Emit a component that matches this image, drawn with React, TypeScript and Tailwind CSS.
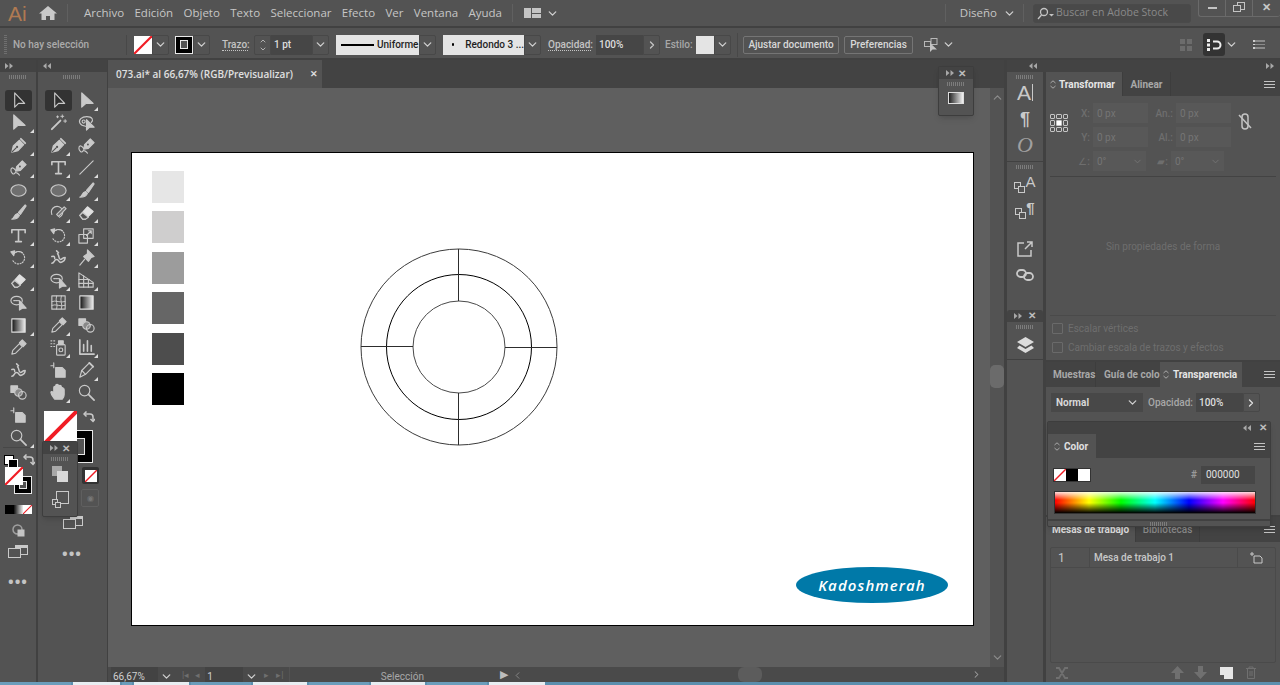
import type { ReactNode } from "react";
import { ChevronDown, ChevronLeft, ChevronRight, ChevronUp } from "lucide-react";

const INK = "#c9c9c9";

function Glyph({ size = 20, children }: { size?: number; children: ReactNode }) {
  return (
    <svg width={size} height={size} viewBox="0 0 20 20" fill="none" stroke={INK} strokeWidth="1.2" strokeLinejoin="round" strokeLinecap="round">
      {children}
    </svg>
  );
}

// tool icons, all on a 20x20 box
const TOOL_ICONS: Record<string, ReactNode> = {
  select: <path d="M6 2v15l4-4h6.500z" fill="#2f2f2f" />,
  direct: <path d="M5 2v15l4.500-4H17z" fill={INK} />,
  wand: (
    <>
      <path d="M3 17l9-9" strokeWidth="2" />
      <path d="M14 2v3M12.500 3.500h3M17 7v3M15.500 8.500h3M9 3v2M8 4h2" strokeWidth="1" />
    </>
  ),
  lasso: (
    <>
      <path d="M9 14C3 13 1 9 4 6c3-3 10-3 12 0 1 2 0 3-1 4" />
      <circle cx="7" cy="9" r="1.600" />
      <path d="M10 7v11l3-3h5z" fill={INK} />
    </>
  ),
  pen: (
    <>
      <path d="M3 17l1.500-6.500L11 4.500l4.500 4.500-6 6.500z" fill={INK} />
      <path d="M3.500 16.500l4-4" stroke="#535353" />
      <circle cx="8.500" cy="11.500" r="1.200" fill="#535353" stroke="none" />
      <path d="M12.500 3l4.500 4.500" strokeWidth="2" />
    </>
  ),
  curve: (
    <>
      <path d="M8 9l6-6 4 4-6 6-5 1z" fill={INK} />
      <circle cx="11.500" cy="9" r="1" fill="#535353" stroke="none" />
      <path d="M7 13c-3-4-5-3-5 0s3 5 4 3 4 1 5 2" />
    </>
  ),
  type: <path d="M3 7V4h14v3M10 4v12M7 16.500h6" strokeWidth="1.700" />,
  line: <path d="M3 17L17 3" />,
  ellipse: <ellipse cx="10" cy="10" rx="8" ry="6" fill="#6f6f6f" />,
  brush: (
    <>
      <path d="M10 10l7-8 1 1-6 9z" fill={INK} />
      <path d="M3 17c2 0 2-5 6-6l2 2c-1 3-4 4-8 4z" fill={INK} />
    </>
  ),
  shaper: (
    <>
      <path d="M3 12a6 6 0 1 1 8 3" />
      <path d="M10 14l8-8-2-2-8 8z" fill="#6f6f6f" />
    </>
  ),
  eraser: (
    <>
      <path d="M3 13l8-9 6 5-8 8H6z" fill="#e0e0e0" stroke="#e0e0e0" />
      <path d="M3 13l3-3 6 5-3 2H6z" fill="#535353" />
    </>
  ),
  rotate: (
    <>
      <path d="M5 6a6.500 6.500 0 1 1 -1 7" strokeDasharray="1.200 1.600" />
      <path d="M5 6a6.500 6.500 0 0 1 9-1" />
      <path d="M2 4l4-1-1 5z" fill={INK} />
    </>
  ),
  scale: (
    <>
      <rect x="2" y="9" width="9" height="9" />
      <rect x="7" y="3" width="10" height="10" />
      <path d="M10 10l5-5M12 5h3v3" />
    </>
  ),
  puppet: <path d="M3 16c3 0 2-4 5-4s2 4 5 3 4-3 4-5c-3 0-3 2-5 2s-1-4-3-6M8 3l2 2M3 9c2-1 3 0 3 2" strokeWidth="1.600" />,
  pin: (
    <>
      <path d="M11 2l7 7-3 1-3 4-5-5 4-3z" fill={INK} />
      <path d="M8 12l-5 6" />
    </>
  ),
  builder: (
    <>
      <ellipse cx="8" cy="8" rx="6" ry="4.500" />
      <path d="M5 8h5" strokeDasharray="1 1" />
      <path d="M11 8v10l3-2h4z" fill={INK} />
    </>
  ),
  perspective: (
    <>
      <path d="M2 2l15 10v5H2z" />
      <path d="M7 5v12M12 9v8M2 9h11M2 13h15" />
    </>
  ),
  mesh: (
    <>
      <rect x="3" y="3" width="14" height="14" />
      <path d="M3 9c4-2 9 2 14 0M3 13c4-2 9 2 14 0M8 3c-2 5 2 9 0 14M13 3c-2 5 2 9 0 14" strokeWidth="1" />
    </>
  ),
  gradient: (
    <>
      <defs>
        <linearGradient id="gr1">
          <stop offset="0" stopColor="#111" />
          <stop offset="1" stopColor="#eee" />
        </linearGradient>
      </defs>
      <rect x="3" y="3" width="14" height="14" fill="url(#gr1)" stroke="#ddd" />
    </>
  ),
  dropper: (
    <>
      <path d="M3 17l1-4 7-7 3 3-7 7z" />
      <path d="M11 5l3-3 4 4-3 3z" fill={INK} />
    </>
  ),
  blend: (
    <>
      <rect x="2" y="3" width="7" height="7" fill={INK} />
      <circle cx="10" cy="10" r="4" fill="#888" />
      <circle cx="14" cy="13" r="4" />
    </>
  ),
  spray: (
    <>
      <rect x="8" y="7" width="9" height="11" rx="1" />
      <circle cx="12.500" cy="12.500" r="2" />
      <rect x="10" y="3" width="5" height="4" fill={INK} />
      <path d="M2 3h1M5 3h1M2 6h1M5 6h1M2 9h1M5 9h1" />
    </>
  ),
  chart: <path d="M3 2v15h15M7 14V7M11 14V3M15 14V8" strokeWidth="1.700" />,
  artboard: (
    <>
      <path d="M7 7h7l3 3v7H7z" fill={INK} />
      <path d="M5 2v5M2 5h3" />
    </>
  ),
  slice: (
    <>
      <path d="M3 17l2-7 8-8 4 4-8 8z" />
      <path d="M5 10l4 4" />
      <path d="M13 2l4 4" strokeWidth="2" />
    </>
  ),
  hand: <path d="M6 17c-2-3-4-5-4-7s2-1 3 1V5c0-2 2-2 2 0V3c0-2 3-2 3 0v1c0-2 3-2 3 0v2c0-2 3-1 3 1v5c0 3-1 4-2 5z" fill={INK} />,
  zoom: (
    <>
      <circle cx="8" cy="8" r="5.500" />
      <path d="M12 12l6 6" strokeWidth="1.800" />
    </>
  ),
};

type Tool = { icon: string; flyout?: boolean; active?: boolean };

const LEFT_TOOLS: Tool[] = [
  { icon: "select", active: true },
  { icon: "direct", flyout: true },
  { icon: "pen", flyout: true },
  { icon: "curve", flyout: true },
  { icon: "ellipse", flyout: true },
  { icon: "brush", flyout: true },
  { icon: "type", flyout: true },
  { icon: "rotate", flyout: true },
  { icon: "eraser", flyout: true },
  { icon: "builder" },
  { icon: "gradient", flyout: true },
  { icon: "dropper" },
  { icon: "puppet" },
  { icon: "blend" },
  { icon: "artboard" },
  { icon: "zoom", flyout: true },
];

const RIGHT_TOOLS: Tool[] = [
  { icon: "select", active: true },
  { icon: "direct", flyout: true },
  { icon: "wand" },
  { icon: "lasso" },
  { icon: "pen", flyout: true },
  { icon: "curve" },
  { icon: "type", flyout: true },
  { icon: "line", flyout: true },
  { icon: "ellipse", flyout: true },
  { icon: "brush", flyout: true },
  { icon: "shaper", flyout: true },
  { icon: "eraser", flyout: true },
  { icon: "rotate", flyout: true },
  { icon: "scale", flyout: true },
  { icon: "puppet" },
  { icon: "pin", flyout: true },
  { icon: "builder", flyout: true },
  { icon: "perspective", flyout: true },
  { icon: "mesh" },
  { icon: "gradient" },
  { icon: "dropper", flyout: true },
  { icon: "blend" },
  { icon: "spray", flyout: true },
  { icon: "chart", flyout: true },
  { icon: "artboard" },
  { icon: "slice", flyout: true },
  { icon: "hand", flyout: true },
  { icon: "zoom" },
];

const MENU = ["Archivo", "Edición", "Objeto", "Texto", "Seleccionar", "Efecto", "Ver", "Ventana", "Ayuda"];
const GREYS = ["bg-[#e6e6e6]", "bg-[#cfcece]", "bg-[#9c9c9c]", "bg-[#666666]", "bg-[#4d4d4d]", "bg-[#000000]"];
const TASKBAR = ["w-[71px]", "w-[47px]", "w-[10px]", "w-[55px]", "w-[60px]", "w-[54px]", "w-[60px]", "w-[54px]", "w-[60px]", "w-[56px]"];

function ToolCell({ tool }: { tool: Tool }) {
  return (
    <div className="relative flex h-[22.5px] items-center justify-center">
      {tool.active && <div className="absolute h-[21px] w-[27px] rounded-[3px] bg-[#333333]" />}
      <div className="relative flex">
        <Glyph size={19}>{TOOL_ICONS[tool.icon]}</Glyph>
      </div>
      {tool.flyout && (
        <div className="absolute bottom-[1px] right-[2px] h-0 w-0 border-b-[4px] border-l-[4px] border-b-[#dddddd] border-l-transparent" />
      )}
    </div>
  );
}

function NoneSwatch({ className }: { className: string }) {
  return (
    <svg className={className} viewBox="0 0 20 20" preserveAspectRatio="none">
      <rect width="20" height="20" fill="#fff" />
      <path d="M0 20L20 0" stroke="#f01c24" strokeWidth="2.400" />
    </svg>
  );
}

function StrokeSwatch({ className }: { className: string }) {
  return (
    <div className={`flex items-center justify-center border border-[#e8e8e8] bg-black ${className}`}>
      <div className="h-[55%] w-[55%] border border-[#e8e8e8] bg-[#535353]" />
    </div>
  );
}

function DoubleArrow({ left = false }: { left?: boolean }) {
  return (
    <svg width="8" height="6" viewBox="0 0 8 6" fill="#a8a8a8">
      {left ? <path d="M3.500 0v6L0 3zM8 0v6L4.500 3z" /> : <path d="M0 0v6l3.500-3zM4.500 0v6L8 3z" />}
    </svg>
  );
}

function CloseX() {
  return <span className="text-[10px] leading-none font-bold text-[#bdbdbd]">✕</span>;
}

function Grip() {
  return <div className="h-[4px] w-[18px] bg-[repeating-linear-gradient(to_right,#7c7c7c_0,#7c7c7c_1px,transparent_1px,transparent_2px)]" />;
}

function Burger() {
  return (
    <div className="flex w-[11px] flex-col gap-[2px]">
      <div className="h-px bg-[#c4c4c4]" />
      <div className="h-px bg-[#c4c4c4]" />
      <div className="h-px bg-[#c4c4c4]" />
    </div>
  );
}

function Chev({ className = "" }: { className?: string }) {
  return <ChevronDown size={13} strokeWidth={2.400} className={`text-[#d0d0d0] ${className}`} />;
}

function ChevBox({ className = "" }: { className?: string }) {
  return (
    <div className={`flex h-[20px] w-[17px] items-center justify-center rounded-r-[2px] border border-[#484848] ${className}`}>
      <Chev />
    </div>
  );
}

function MenuBar() {
  return (
    <header className="flex h-[28px] shrink-0 items-center border-b-2 border-[#414141] bg-[#535353] text-[11.5px] text-[#c6c6c6]">
      <span className="ml-[8px] w-[18px] font-['Liberation_Sans',sans-serif] text-[21px] leading-none text-[#b07a52]">Ai</span>
      <svg className="ml-[13px]" width="18" height="16" viewBox="0 0 18 16" fill="#c9c9c9">
        <path d="M9 1L0 8.500h2.500V15h4.500v-4h4v4h4.500V8.500H18z" />
      </svg>
      <div className="ml-[10px] h-[18px] w-px bg-[#606060]" />
      <nav className="ml-[16px] flex w-[418px] justify-between">
        {MENU.map((item) => (
          <span key={item}>{item}</span>
        ))}
      </nav>
      <div className="ml-[10px] h-[18px] w-px bg-[#606060]" />
      <div className="ml-[11px] flex h-[10px] w-[17px] gap-px">
        <div className="w-[7px] bg-[#c4c4c4]" />
        <div className="flex flex-1 flex-col gap-px">
          <div className="flex-1 bg-[#c4c4c4]" />
          <div className="flex-1 bg-[#c4c4c4]" />
        </div>
      </div>
      <Chev className="ml-[5px]" />
      <div className="ml-auto h-[18px] w-px bg-[#606060]" />
      <span className="ml-[14px]">Diseño</span>
      <Chev className="ml-[6px]" />
      <div className="ml-[7px] h-[18px] w-px bg-[#606060]" />
      <div className="ml-[9px] flex h-[19px] w-[158px] items-center gap-[2px] rounded-[3px] border border-[#4a4a4a] bg-[#494949] pl-[3px] text-[10.5px] text-[#8a8a8a]">
        <svg width="17" height="13" viewBox="0 0 17 13" fill="none" stroke="#c4c4c4" strokeWidth="1.300">
          <circle cx="7" cy="5" r="3.500" />
          <path d="M4.500 8L1 12" />
          <path d="M12 7h5l-2.500 2.500z" fill="#c4c4c4" stroke="none" />
        </svg>
        Buscar en Adobe Stock
      </div>
      <div className="mb-[10px] ml-[7px] flex h-[17px] w-[82px] rounded-b-[3px] border-b border-l border-[#6a6a6a]">
        <div className="flex w-[27px] items-center justify-center border-r border-[#6a6a6a]">
          <div className="h-[2px] w-[9px] bg-[#c4c4c4]" />
        </div>
        <div className="relative flex w-[27px] items-center justify-center border-r border-[#6a6a6a]">
          <div className="h-[8px] w-[8px] translate-x-[2px] -translate-y-[2px] border border-[#c4c4c4]" />
          <div className="absolute h-[7px] w-[8px] translate-x-[-2px] translate-y-[1px] border border-[#c4c4c4] bg-[#535353]" />
        </div>
        <div className="flex flex-1 items-center justify-center text-[11px] font-bold text-[#c8c8c8]">✕</div>
      </div>
    </header>
  );
}

function LightField({ width, children }: { width: string; children: ReactNode }) {
  return <div className={`flex h-[20px] items-center whitespace-nowrap bg-[#e4e4e4] text-[#1f1f1f] ${width}`}>{children}</div>;
}

function ControlBar() {
  return (
    <div className="flex h-[32px] shrink-0 items-center border-b-2 border-[#414141] bg-[#535353] pt-[3px] font-['Roboto',sans-serif] text-[10px] font-medium text-[#c4c4c4]">
      <div className="ml-[4px] h-[20px] w-[3px] bg-[repeating-linear-gradient(to_bottom,#6f6f6f_0,#6f6f6f_1px,transparent_1px,transparent_2px)]" />
      <span className="ml-[6px] w-[113px] text-[#ababab]">No hay selección</span>
      <div className="h-[20px] w-px bg-[#484848]" />
      <NoneSwatch className="ml-[7px] h-[18px] w-[18px]" />
      <ChevBox />
      <StrokeSwatch className="ml-[6px] h-[18px] w-[18px]" />
      <ChevBox />
      <span className="ml-[12px] w-[26px] border-b border-dotted border-[#c4c4c4] leading-[11px]">Trazo:</span>
      <div className="ml-[6px] flex h-[20px] w-[17px] flex-col items-center justify-center rounded-l-[2px] border border-[#484848]">
        <ChevronUp size={8} strokeWidth={2.500} />
        <ChevronDown size={8} strokeWidth={2.500} />
      </div>
      <div className="flex h-[20px] w-[41px] items-center bg-[#464646] pl-[3px] text-[#dedede]">1 pt</div>
      <ChevBox />
      <div className="ml-[7px]">
        <LightField width="w-[83px]">
          <div className="ml-[5px] h-[2px] w-[33px] bg-black" />
          <span className="ml-[3px]">Uniforme</span>
        </LightField>
      </div>
      <ChevBox />
      <div className="ml-[7px]">
        <LightField width="w-[81px]">
          <div className="ml-[9px] h-[3px] w-[3px] rounded-full bg-black" />
          <span className="ml-[11px]">Redondo 3 ...</span>
        </LightField>
      </div>
      <ChevBox />
      <span className="ml-[7px] w-[43px] border-b border-dotted border-[#c4c4c4] leading-[11px]">Opacidad:</span>
      <div className="ml-[5px] flex h-[20px] w-[47px] items-center bg-[#464646] pl-[3px] text-[#dedede]">100%</div>
      <div className="flex h-[20px] w-[17px] items-center justify-center rounded-r-[2px] border border-[#484848]">
        <ChevronRight size={12} strokeWidth={2.600} />
      </div>
      <span className="ml-[5px] w-[26px] text-[#a8a8a8]">Estilo:</span>
      <div className="ml-[5px] h-[18px] w-[18px] bg-[#e4e4e4]" />
      <ChevBox />
      <div className="ml-[6px] h-[24px] w-px bg-[#484848]" />
      <div className="ml-[5px] flex h-[18px] w-[96px] items-center justify-center rounded-[2px] border border-[#757575] text-[#d8d8d8]">Ajustar documento</div>
      <div className="ml-[5px] flex h-[18px] w-[69px] items-center justify-center rounded-[2px] border border-[#757575] text-[#d8d8d8]">Preferencias</div>
      <svg className="ml-[10px]" width="16" height="15" viewBox="0 0 16 15" fill="none" stroke="#b8b8b8">
        <rect x="8" y="1.500" width="6" height="6" />
        <rect x="1.500" y="4.500" width="6" height="5" />
        <path d="M7 6v9l2.500-2.500H14z" fill="#c4c4c4" stroke="none" />
      </svg>
      <Chev className="ml-[3px]" />
      <div className="ml-auto grid h-[12px] w-[12px] grid-cols-2 gap-[2px]">
        <div className="bg-[#6c6c6c]" />
        <div className="bg-[#6c6c6c]" />
        <div className="bg-[#6c6c6c]" />
        <div className="bg-[#6c6c6c]" />
      </div>
      <div className="ml-[11px] flex h-[23px] w-[22px] items-center justify-center rounded-[3px] bg-[#333333]">
        <svg width="16" height="14" viewBox="0 0 16 14" fill="none">
          <path d="M1 1h3v3H1zM1 5.500h3v3H1zM1 10h3v3H1z" fill="#eee" />
          <path d="M7 3.500h4a3.500 3.500 0 0 1 0 7H7" stroke="#eee" strokeWidth="2" />
        </svg>
      </div>
      <Chev />
      <div className="ml-[15px] mr-[15px] flex w-[12px] flex-col gap-[2px]">
        <div className="h-[1.500px] border-l-[2px] border-[#cfcfcf] bg-[#8a8a8a]" />
        <div className="h-[1.500px] border-l-[2px] border-[#cfcfcf] bg-[#8a8a8a]" />
        <div className="h-[1.500px] border-l-[2px] border-[#cfcfcf] bg-[#8a8a8a]" />
      </div>
    </div>
  );
}

function ToolDots() {
  return <div className="text-center text-[15px] leading-none font-bold tracking-[1px] text-[#c4c4c4]">•••</div>;
}

function ScreenMode() {
  return (
    <svg width="20" height="14" viewBox="0 0 20 14" fill="#535353" stroke="#c9c9c9">
      <rect x="7.500" y="0.500" width="12" height="9" />
      <rect x="0.500" y="3.500" width="12" height="9" />
      <rect x="8" y="1" width="11" height="2" fill="#c9c9c9" stroke="none" />
    </svg>
  );
}

function SwapArrow({ className }: { className: string }) {
  return (
    <svg className={className} width="12" height="12" viewBox="0 0 12 12" fill="none" stroke="#c9c9c9" strokeWidth="1.500">
      <path d="M2 3h5a3 3 0 0 1 3 3v4" />
      <path d="M3.500 .5L1 3l2.500 2.500M7.500 8l2.500 2.500L12 8" />
    </svg>
  );
}

function DrawMode() {
  return (
    <svg width="13" height="13" viewBox="0 0 13 13" fill="none">
      <circle cx="5.500" cy="5.500" r="4.500" stroke="#a0a0a0" strokeWidth="1.500" />
      <rect x="5.500" y="5.500" width="7" height="7" fill="#c4c4c4" />
    </svg>
  );
}

function LeftToolbar() {
  return (
    <aside className="flex w-[36px] shrink-0 flex-col bg-[#535353]">
      <div className="flex h-[12px] items-center bg-[#434343] pl-[5px]">
        <DoubleArrow />
      </div>
      <div className="flex h-[17px] justify-center pt-[3px]">
        <Grip />
      </div>
      {LEFT_TOOLS.map((tool, i) => (
        <ToolCell key={i} tool={tool} />
      ))}
      <div className="mx-[3px] mt-[-2px] h-px bg-[#474747]" />
      <div className="relative mt-[7px] h-[48px]">
        <div className="absolute left-[4px] top-0 h-[10px] w-[10px] border border-black bg-white" />
        <div className="absolute left-[8px] top-[4px] h-[10px] w-[10px] border border-white bg-black" />
        <SwapArrow className="absolute left-[23px] top-[-1px]" />
        <StrokeSwatch className="absolute left-[14px] top-[21px] h-[18px] w-[18px]" />
        <NoneSwatch className="absolute left-[5px] top-[12px] h-[18px] w-[18px]" />
      </div>
      <div className="mt-[2px] flex justify-center">
        <div className="flex h-[9px] w-[27px]">
          <div className="w-[9px] bg-black" />
          <div className="w-[9px] bg-[linear-gradient(to_right,#111,#eee)]" />
          <NoneSwatch className="h-[9px] w-[9px]" />
        </div>
      </div>
      <div className="mt-[8px] flex h-[16px] items-center justify-center">
        <DrawMode />
      </div>
      <div className="mt-[7px] flex justify-center">
        <ScreenMode />
      </div>
      <div className="mt-[15px]">
        <ToolDots />
      </div>
    </aside>
  );
}

function SecondToolbar() {
  return (
    <aside className="relative ml-[2px] flex w-[69px] shrink-0 flex-col bg-[#535353] pl-[6px] pr-[7px]">
      <div className="-ml-[6px] -mr-[7px] flex h-[12px] items-center bg-[#434343] pl-[5px]">
        <DoubleArrow left />
      </div>
      <div className="flex h-[17px] justify-center pt-[3px]">
        <Grip />
      </div>
      <div className="grid grid-cols-2">
        {RIGHT_TOOLS.map((tool, i) => (
          <ToolCell key={i} tool={tool} />
        ))}
      </div>
      <div className="relative h-[100px]">
        <StrokeSwatch className="absolute left-[16px] top-[26px] h-[33px] w-[33px]" />
        <NoneSwatch className="absolute left-0 top-[7px] h-[33px] w-[33px]" />
        <SwapArrow className="absolute left-[39px] top-[7px]" />
        <div className="absolute left-[38px] top-[63px] flex h-[17px] w-[17px] items-center justify-center rounded-[2px] bg-[#333333]">
          <NoneSwatch className="h-[12px] w-[12px]" />
        </div>
        <div className="absolute left-[37px] top-[85px] flex h-[18px] w-[18px] items-center justify-center rounded-[2px] border border-[#606060] text-[8px] text-[#777777]">◉</div>
      </div>
      <div className="mt-[12px] flex justify-center pl-[1px]">
        <ScreenMode />
      </div>
      <div className="mt-[16px]">
        <ToolDots />
      </div>
    </aside>
  );
}

function Artboard() {
  return (
    <div className="relative ml-[23px] mt-[64px] h-[474px] w-[843px] border border-black bg-white">
      <div className="absolute left-[20px] top-[18px] flex flex-col gap-[8.400px]">
        {GREYS.map((c) => (
          <div key={c} className={`h-[32px] w-[32px] ${c}`} />
        ))}
      </div>
      <svg className="absolute left-[227px] top-[94px]" width="200" height="200" viewBox="0 0 200 200" fill="none" stroke="#2d2d2d">
        <circle cx="100" cy="100" r="98" stroke="#3c3c3c" />
        <circle cx="100" cy="100" r="72.500" stroke="#000" />
        <circle cx="100" cy="100" r="46" stroke="#4a4a4a" />
        <path d="M99.500 2v52M99.500 146v52M2 99.500h52M146 100.500h52" />
      </svg>
      <div className="absolute left-[664px] top-[414px] flex h-[36px] w-[152px] items-center justify-center rounded-[50%] bg-[#0079a8] text-[15px] font-semibold tracking-[1.100px] text-white italic">
        Kadoshmerah
      </div>
    </div>
  );
}

function Document() {
  return (
    <main className="ml-px flex min-w-0 flex-1 flex-col">
      <div className="flex h-[28px] shrink-0 bg-[#434343]">
        <div className="flex w-[214px] items-center bg-[#535353] pl-[8px] text-[10px] font-semibold text-[#e0e0e0]">
          <span className="w-[194px]">073.ai* al 66,67% (RGB/Previsualizar)</span>
          <span className="text-[9px] font-bold text-[#dcdcdc]">✕</span>
        </div>
      </div>
      <div className="flex min-h-0 flex-1">
        <div className="flex-1 bg-[#5f5f5f]">
          <Artboard />
        </div>
        <div className="relative flex w-[14px] flex-col items-center justify-between bg-[#535353] py-[3px]">
          <ChevronUp size={13} strokeWidth={2.200} className="text-[#8c8c8c]" />
          <div className="absolute left-0 top-[277px] h-[23px] w-[14px] rounded-[5px] bg-[#6b6b6b]" />
          <ChevronDown size={13} strokeWidth={2.200} className="text-[#8c8c8c]" />
        </div>
      </div>
      <StatusBar />
    </main>
  );
}

function StatusBar() {
  return (
    <footer className="flex h-[15px] shrink-0 items-center bg-[#4a4a4a] pl-[3px] font-['Roboto',sans-serif] text-[10px] text-[#b8b8b8]">
      <div className="flex h-full w-[47px] items-center bg-[#434343] pl-[2px] pt-[3px] text-[#d0d0d0]">66,67%</div>
      <Chev className="ml-[2px] mt-[3px]" />
      <span className="ml-[9px] mt-[2px] text-[9px] text-[#6f6f6f]">|◂</span>
      <span className="ml-[6px] mt-[2px] text-[9px] text-[#6f6f6f]">◂</span>
      <div className="ml-[5px] flex h-full w-[38px] items-center bg-[#434343] pl-[2px] pt-[3px] text-[#d0d0d0]">1</div>
      <Chev className="ml-[2px] mt-[3px]" />
      <span className="ml-[6px] mt-[2px] text-[9px] text-[#6f6f6f]">▸</span>
      <span className="ml-[7px] mt-[2px] text-[9px] text-[#6f6f6f]">▸|</span>
      <div className="ml-[6px] h-full w-px bg-[#535353]" />
      <span className="ml-[17px] mt-[3px] w-[190px] text-center text-[#a8a8a8]">Selección</span>
      <span className="ml-[3px] mt-[2px] text-[11px] text-[#bdbdbd]">▶</span>
      <ChevronLeft size={11} className="ml-[4px] mt-[1px] text-[#8a8a8a]" />
      <div className="ml-[215px] h-[15px] w-[24px] rounded-[6px] bg-[#5c5c5c]" />
      <ChevronRight size={11} strokeWidth={2.200} className="ml-auto mr-[22px] text-[#a0a0a0]" />
    </footer>
  );
}

function DockIcon({ children, h }: { children: ReactNode; h: string }) {
  return <div className={`flex items-center justify-center ${h}`}>{children}</div>;
}

function SmallSquares() {
  return (
    <div className="relative mt-[6px] h-[11px] w-[11px]">
      <div className="absolute left-0 top-0 h-[7px] w-[7px] border border-[#c9c9c9]" />
      <div className="absolute left-[4px] top-[4px] h-[7px] w-[7px] border border-[#c9c9c9] bg-[#535353]" />
    </div>
  );
}

function RightDock() {
  return (
    <div className="ml-[3px] flex w-[36px] shrink-0 flex-col bg-[#535353] text-[#c9c9c9]">
      <div className="flex h-[90px] flex-col items-center border-b border-[#414141] pt-[3px]">
        <Grip />
        <DockIcon h="h-[28px] -mt-[1px]">
          <span className="font-['Liberation_Sans',sans-serif] text-[21px] leading-none">A</span>
          <div className="ml-px h-[17px] w-px bg-[#c9c9c9]" />
        </DockIcon>
        <DockIcon h="h-[26px]">
          <span className="font-['Liberation_Sans',sans-serif] text-[18px] leading-none font-bold">¶</span>
        </DockIcon>
        <DockIcon h="h-[26px]">
          <span className="font-['Liberation_Serif',serif] text-[22px] leading-none text-[#a0a0a0] italic">O</span>
        </DockIcon>
      </div>
      <div className="flex h-[70px] flex-col items-center pt-[3px]">
        <Grip />
        <DockIcon h="h-[26px] mt-[2px]">
          <SmallSquares />
          <span className="-mt-[6px] font-['Liberation_Sans',sans-serif] text-[15px] leading-none">A</span>
        </DockIcon>
        <DockIcon h="h-[26px]">
          <SmallSquares />
          <span className="-mt-[6px] font-['Liberation_Sans',sans-serif] text-[15px] leading-none font-bold">¶</span>
        </DockIcon>
      </div>
      <div className="flex h-[78px] flex-col items-center pt-[4px]">
        <DockIcon h="h-[26px]">
          <svg width="18" height="18" viewBox="0 0 18 18" fill="none" stroke="#c9c9c9" strokeWidth="1.500">
            <path d="M8 3H2v13h13v-6M9 9l7-7M11 2h5v5" />
          </svg>
        </DockIcon>
        <DockIcon h="h-[26px]">
          <svg width="18" height="12" viewBox="0 0 18 12" fill="none" stroke="#c9c9c9" strokeWidth="1.800">
            <rect x="1" y="1" width="9" height="7" rx="3.500" />
            <rect x="8" y="4" width="9" height="7" rx="3.500" />
          </svg>
        </DockIcon>
      </div>
      <div className="flex h-[50px] flex-col items-center border-b border-[#414141]">
        <div className="flex h-[12px] w-full shrink-0 items-center justify-between rounded-t-[3px] bg-[#434343] px-[7px]">
          <DoubleArrow />
          <CloseX />
        </div>
        <div className="mt-[3px]">
          <Grip />
        </div>
        <svg className="mt-[8px]" width="17" height="17" viewBox="0 0 17 17" fill="#dcdcdc">
          <path d="M8.500 0L17 5l-8.500 5L0 5z" />
          <path d="M2.500 8.500l6 3.500 6-3.500L17 11l-8.500 5L0 11z" />
        </svg>
      </div>
    </div>
  );
}

function TabRow({ children, h = "h-[24px]" }: { children: ReactNode; h?: string }) {
  return (
    <div className={`flex shrink-0 items-stretch bg-[#434343] text-[10px] font-medium ${h}`}>
      {children}
      <div className="ml-auto flex items-center pr-[5px]">
        <Burger />
      </div>
    </div>
  );
}

function UpDown() {
  return (
    <svg width="6" height="9" viewBox="0 0 6 9" fill="none" stroke="#a8a8a8" strokeWidth="1">
      <path d="M.5 3L3 .8 5.500 3M.5 6L3 8.200 5.500 6" />
    </svg>
  );
}

function DimField({ label, w = "w-[55px]", value = "0 px", lw, chevron }: { label: ReactNode; w?: string; value?: string; lw: string; chevron?: boolean }) {
  return (
    <div className="flex items-center">
      <span className={`text-right font-medium text-[#6e6e6e] ${lw}`}>{label}</span>
      <div className={`ml-[3px] flex h-[20px] items-center justify-between bg-[#585858] pl-[4px] pr-[3px] text-[#757575] ${w}`}>
        {value}
        {chevron && <ChevronDown size={11} strokeWidth={2} className="text-[#747474]" />}
      </div>
    </div>
  );
}

function TransformPanel() {
  return (
    <section className="flex h-[288px] shrink-0 flex-col bg-[#535353] text-[10px]">
      <TabRow>
        <div className="flex w-[76px] items-center gap-[3px] bg-[#535353] pl-[4px] font-bold text-[#e6e6e6]">
          <UpDown />
          Transformar
        </div>
        <div className="flex w-[49px] items-center justify-center border-x border-[#3d3d3d] font-bold text-[#a8a8a8]">Alinear</div>
      </TabRow>
      <div className="relative flex pl-[4px] pt-[7px]">
        <div className="mt-[11px] grid h-[18px] w-[18px] grid-cols-3 gap-[1px]">
          {[0, 1, 2, 3, 4, 5, 6, 7, 8].map((n) => (
            <div key={n} className={`rounded-[1px] border border-[#c4c4c4] ${n === 4 ? "bg-white" : ""}`} />
          ))}
        </div>
        <div className="ml-[3px] flex flex-col gap-[4px]">
          <div className="flex gap-[2px]">
            <DimField label="X:" lw="w-[19px]" />
            <DimField label="An.:" lw="w-[23px]" />
          </div>
          <div className="flex gap-[2px]">
            <DimField label="Y:" lw="w-[19px]" />
            <DimField label="Al.:" lw="w-[23px]" />
          </div>
          <div className="flex gap-[2px]">
            <DimField label="∠:" value="0°" w="w-[53px]" lw="w-[19px]" chevron />
            <DimField label="▰:" value="0°" w="w-[53px]" lw="w-[20px]" chevron />
          </div>
        </div>
        <svg className="ml-[7px] mt-[10px]" width="14" height="17" viewBox="0 0 14 17" fill="none" stroke="#c4c4c4" strokeWidth="1.500">
          <rect x="4" y="1" width="6" height="15" rx="3" />
          <path d="M1 2l12 13" />
        </svg>
      </div>
      <div className="mx-[4px] mt-[5px] h-px bg-[#434343]" />
      <div className="mt-[62px] text-center text-[#6e6e6e]">Sin propiedades de forma</div>
      <div className="mx-[4px] mt-[61px] h-px bg-[#4a4a4a]" />
      <div className="ml-[6px] mt-[5px] flex flex-col gap-[4px] text-[#6e6e6e]">
        <div className="flex items-center gap-[5px]">
          <span className="h-[11px] w-[11px] rounded-[1px] border border-[#6a6a6a]" />
          Escalar vértices
        </div>
        <div className="flex items-center gap-[5px]">
          <span className="h-[11px] w-[11px] rounded-[1px] border border-[#6a6a6a]" />
          Cambiar escala de trazos y efectos
        </div>
      </div>
    </section>
  );
}

function TransparencyPanel() {
  return (
    <section className="mt-[2px] flex h-[153px] shrink-0 flex-col bg-[#535353]">
      <TabRow h="h-[25px]">
        <div className="flex w-[50px] items-center border-r border-[#3d3d3d] pl-[7px] font-bold text-[#a8a8a8]">Muestras</div>
        <div className="flex w-[64px] items-center pl-[8px] whitespace-nowrap font-bold text-[#a8a8a8]">Guía de colo</div>
        <div className="flex w-[82px] items-center gap-[4px] bg-[#535353] pl-[3px] font-bold text-[#e6e6e6]">
          <UpDown />
          Transparencia
        </div>
      </TabRow>
      <div className="flex items-center pl-[5px] pt-[6px] text-[10px] font-medium">
        <div className="flex h-[19px] w-[92px] items-center justify-between bg-[#484848] pl-[5px] pr-[4px] font-bold text-[#d8d8d8]">
          Normal
          <Chev />
        </div>
        <span className="ml-[5px] text-[#a8a8a8]">Opacidad:</span>
        <div className="ml-[3px] flex h-[19px] w-[47px] items-center bg-[#464646] pl-[3px] text-[#dedede]">100%</div>
        <div className="flex h-[19px] w-[17px] items-center justify-center rounded-r-[2px] border border-[#484848] text-[#dedede]">
          <ChevronRight size={12} strokeWidth={2.600} />
        </div>
      </div>
    </section>
  );
}

function FootArrow({ down = false }: { down?: boolean }) {
  return (
    <svg width="13" height="13" viewBox="0 0 13 13" fill="#707070">
      {down ? <path d="M4 0h5v6h4l-6.500 7L0 6h4z" /> : <path d="M6.500 0L13 7H9v6H4V7H0z" />}
    </svg>
  );
}

function ArtboardsPanel() {
  return (
    <section className="mt-[2px] flex min-h-0 flex-1 flex-col bg-[#535353]">
      <TabRow h="h-[25px]">
        <div className="flex w-[89px] items-center justify-center bg-[#535353] font-bold text-[#dedede]">Mesas de trabajo</div>
        <div className="flex w-[65px] items-center justify-center border-x border-[#3d3d3d] text-[#8a8a8a]">Bibliotecas</div>
      </TabRow>
      <div className="mx-[4px] mt-[5px] flex h-[116px] flex-col rounded-[2px] border border-[#4a4a4a]">
        <div className="flex h-[20px] items-center border-b border-[#4a4a4a] text-[10px] font-medium text-[#c8c8c8]">
          <span className="w-[39px] border-r border-[#4a4a4a] pl-[7px] text-[12px] font-normal leading-[20px]">1</span>
          <span className="w-[147px] pl-[4px]">Mesa de trabajo 1</span>
          <div className="flex h-full flex-1 items-center justify-center border-l border-[#4a4a4a]">
            <svg width="13" height="12" viewBox="0 0 13 12" fill="none" stroke="#c9c9c9">
              <path d="M4 4h6l2 2v5H4zM2 0v4M0 2h4" />
            </svg>
          </div>
        </div>
      </div>
      <div className="flex h-[19px] items-center pl-[9px] pr-[24px]">
        <svg width="14" height="14" viewBox="0 0 14 14" fill="none" stroke="#707070" strokeWidth="1.800">
          <path d="M1 2h3l6 10h3M1 12h3l6-10h3" />
        </svg>
        <div className="ml-auto flex items-center gap-[10px]">
          <FootArrow />
          <FootArrow down />
          <svg width="13" height="12" viewBox="0 0 13 12" className="mx-[3px]">
            <path d="M0 0h13v12H4V8H0z" fill="#e6e6e6" />
          </svg>
          <svg width="10" height="13" viewBox="0 0 10 13" fill="none" stroke="#707070">
            <path d="M0 2.500h10M3 2.500V1h4v1.500M1.500 3v9.500h7V3M4 5v5M6 5v5" />
          </svg>
        </div>
      </div>
    </section>
  );
}

function FloatingGradient() {
  return (
    <div className="absolute left-[938px] top-[66px] flex h-[50px] w-[36px] flex-col items-center rounded-[2px] border border-[#3d3d3d] bg-[#535353] shadow-md">
      <div className="flex h-[12px] w-full items-center justify-between bg-[#434343] px-[7px]">
        <DoubleArrow />
        <CloseX />
      </div>
      <div className="mt-[3px]">
        <Grip />
      </div>
      <div className="mt-[6px] h-[12px] w-[16px] border border-[#dddddd] bg-[linear-gradient(to_right,#222,#f2f2f2)]" />
    </div>
  );
}

function FloatingTools() {
  return (
    <div className="absolute left-[42px] top-[441px] flex h-[76px] w-[36px] flex-col items-center rounded-[2px] border border-[#3d3d3d] bg-[#535353] shadow-md">
      <div className="flex h-[12px] w-full items-center justify-between bg-[#434343] px-[7px]">
        <DoubleArrow />
        <CloseX />
      </div>
      <div className="mt-[3px]">
        <Grip />
      </div>
      <svg className="mt-[5px]" width="16" height="16" viewBox="0 0 16 16">
        <rect x="0" y="0" width="10" height="10" fill="#a8a8a8" />
        <rect x="5" y="5" width="11" height="11" fill="#d8d8d8" />
      </svg>
      <svg className="mt-[9px]" width="17" height="17" viewBox="0 0 17 17" fill="none" stroke="#c9c9c9">
        <rect x="4.500" y="0.500" width="12" height="12" />
        <rect x="0.500" y="8.500" width="5" height="5" fill="#535353" />
        <rect x="3.500" y="11.500" width="5" height="5" fill="#535353" />
      </svg>
    </div>
  );
}

function FloatingColor() {
  return (
    <div className="absolute left-[1047px] top-[421px] flex h-[106px] w-[224px] flex-col rounded-[2px] border border-[#3d3d3d] bg-[#535353] font-['Roboto',sans-serif] shadow-md">
      <div className="flex h-[12px] shrink-0 items-center justify-end gap-[8px] bg-[#434343] pr-[3px]">
        <DoubleArrow left />
        <CloseX />
      </div>
      <TabRow>
        <div className="flex w-[48px] items-center gap-[4px] bg-[#535353] pl-[6px] font-bold text-[#e0e0e0]">
          <UpDown />
          Color
        </div>
      </TabRow>
      <div className="flex h-[33px] items-center pl-[5px]">
        <div className="flex h-[14px] border border-[#333333]">
          <NoneSwatch className="h-[12px] w-[12px]" />
          <div className="h-[12px] w-[12px] bg-black" />
          <div className="h-[12px] w-[12px] bg-white" />
        </div>
        <span className="ml-auto text-[10px] font-bold text-[#9a9a9a]">#</span>
        <div className="ml-[4px] mr-[15px] flex h-[18px] w-[54px] items-center bg-[#464646] pl-[5px] text-[10px] text-[#e0e0e0]">000000</div>
      </div>
      <div className="ml-[6px] h-[23px] w-[202px] border border-[#333333] bg-[linear-gradient(to_bottom,#ffffffdd_0%,transparent_38%,transparent_52%,#000_100%),linear-gradient(to_right,#f00,#ff0_17%,#0f0_33%,#0ff_50%,#00f_67%,#f0f_84%,#f00)]" />
      <div className="mt-auto flex h-[7px] items-center justify-center border-t-2 border-[#414141]">
        <Grip />
      </div>
    </div>
  );
}

export default function App() {
  return (
    <div className="relative flex h-[685px] w-[1280px] flex-col overflow-hidden bg-[#535353] font-['Open_Sans',sans-serif]">
      <MenuBar />
      <ControlBar />
      <div className="flex min-h-0 flex-1 bg-[#414141]">
        <LeftToolbar />
        <SecondToolbar />
        <Document />
        <div className="flex w-[276px] shrink-0 flex-col font-['Roboto',sans-serif]">
          <div className="ml-[3px] flex h-[12px] shrink-0 items-center bg-[#434343]">
            <div className="ml-[22px]">
              <DoubleArrow left />
            </div>
            <div className="ml-auto mr-[6px]">
              <DoubleArrow />
            </div>
          </div>
          <div className="flex min-h-0 flex-1">
            <RightDock />
            <div className="ml-[3px] flex min-w-0 flex-1 flex-col">
              <TransformPanel />
              <TransparencyPanel />
              <ArtboardsPanel />
            </div>
          </div>
        </div>
      </div>
      <div className="flex h-[3px] shrink-0 gap-[2px] bg-[#5b8fae]">
        {TASKBAR.map((w, i) => (
          <div key={i} className={`${w} ${i % 2 ? "bg-[#e8eef2]" : "bg-[#6a9dbb]"}`} />
        ))}
      </div>
      <FloatingGradient />
      <FloatingTools />
      <FloatingColor />
    </div>
  );
}
